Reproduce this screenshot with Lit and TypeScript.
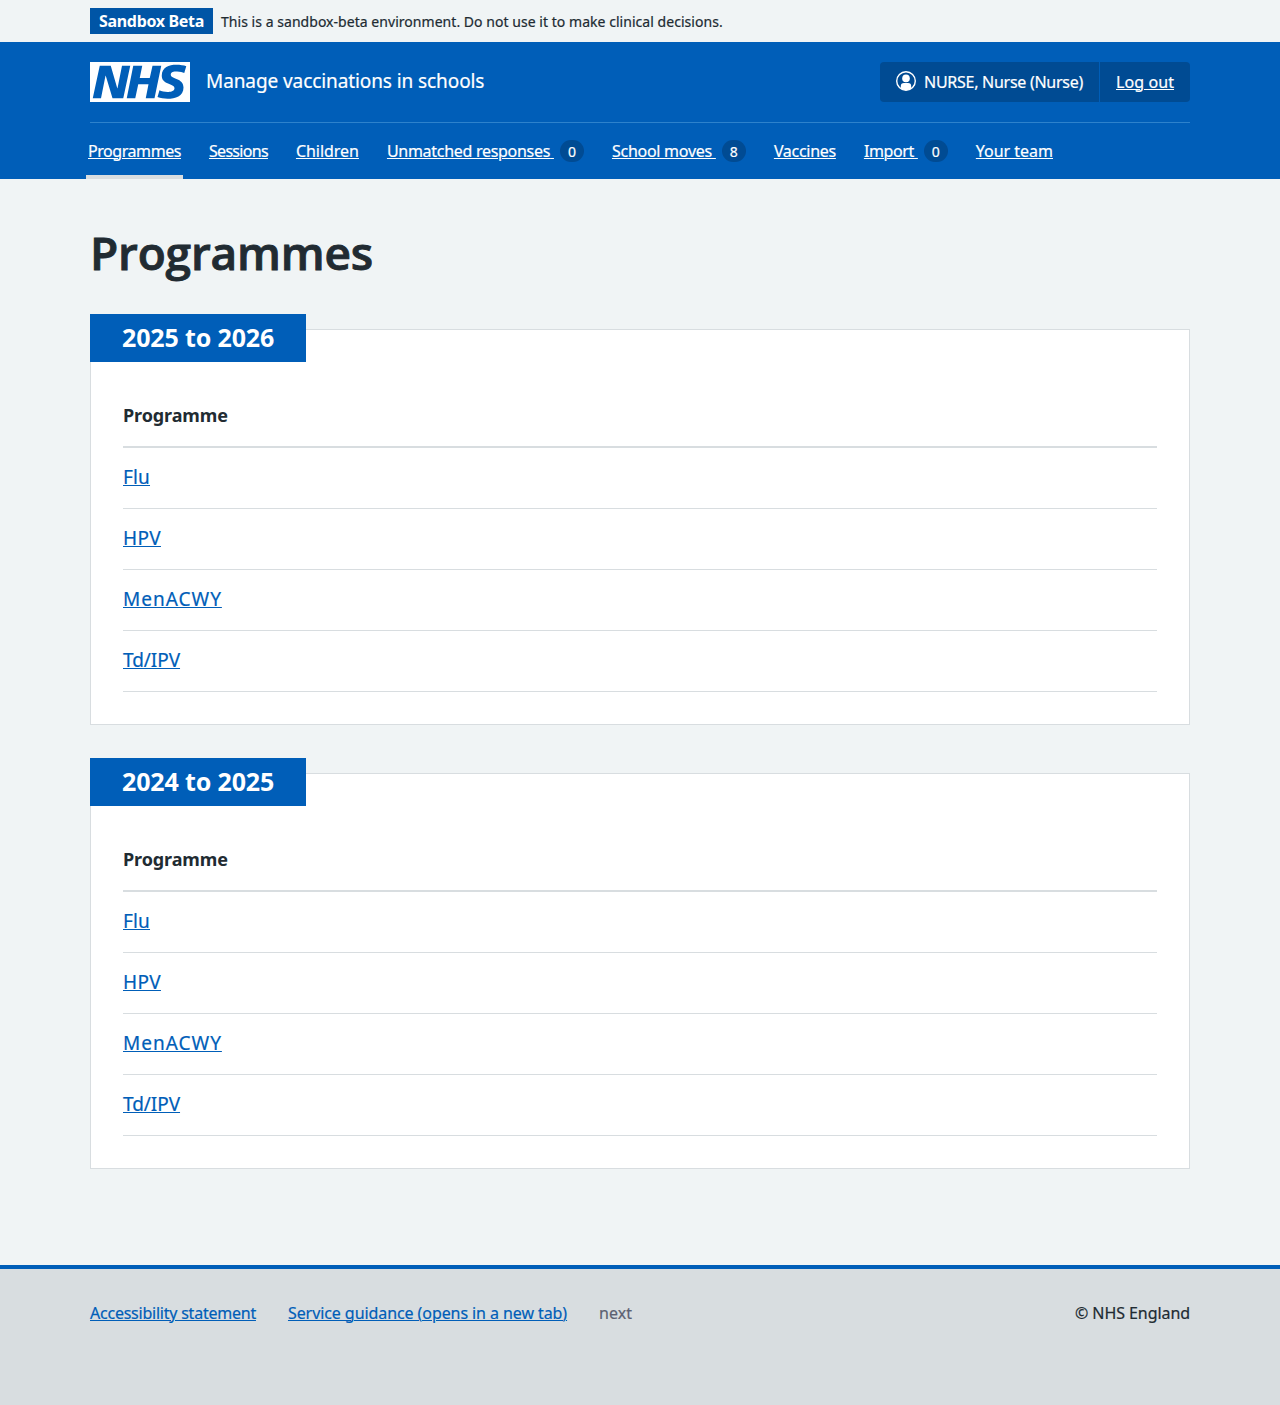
import { LitElement, html, css, nothing } from "lit";

interface NavItem { label: string; cls: string; count?: number; current?: boolean; }

const navItems: NavItem[] = [
  { label: "Programmes", cls: "n-programmes", current: true },
  { label: "Sessions", cls: "n-sessions" },
  { label: "Children", cls: "n-children" },
  { label: "Unmatched responses", cls: "n-unmatched", count: 0 },
  { label: "School moves", cls: "n-moves", count: 8 },
  { label: "Vaccines", cls: "n-vaccines" },
  { label: "Import", cls: "n-import", count: 0 },
  { label: "Your team", cls: "n-team" },
];

const programmes = [
  { label: "Flu", cls: "p-flu" },
  { label: "HPV", cls: "p-hpv" },
  { label: "MenACWY", cls: "p-men" },
  { label: "Td/IPV", cls: "p-td" },
];

class AppRoot extends LitElement {
  static styles = css`
    :host { display: block; min-height: 1405px; background: #f0f4f5; color: #212b32;
      font: 400 16px/24px "Noto Sans", "Open Sans", sans-serif; -webkit-text-stroke: 0.2px currentColor; }
    * { box-sizing: border-box; }
    .wrap { width: 1100px; margin: 0 auto; }
    a { color: #005eb8; text-decoration: underline; text-decoration-thickness: 1px; text-underline-offset: 1px; white-space: nowrap; -webkit-text-stroke: 0.2px currentColor; }

    .banner .wrap { height: 42px; padding: 8px 0; display: flex; align-items: center; gap: 8px; }
    .tag { height: 26px; width: 123px; text-align: center; background: #0055a6; color: #fff; font-weight: 700; line-height: 26px; letter-spacing: -0.32px; white-space: nowrap; -webkit-text-stroke: 0; }
    .notice { font-size: 14px; line-height: 26px; letter-spacing: 0.04px; padding-top: 1px; white-space: nowrap; }

    .header { background: #005eb8; color: #fff; height: 137px; -webkit-text-stroke: 0.2px #fff; }
    .header a { color: #fff; }
    .top { height: 81px; padding: 20px 0; display: flex; border-bottom: 1px solid #2d82cc; }
    .logo { width: 100px; height: 40px; display: block; -webkit-text-stroke: 0; }
    .service { flex: 1; padding-left: 16px; font-size: 19px; line-height: 39px; letter-spacing: -0.09px; white-space: nowrap; }
    .account { display: flex; height: 40px; border-radius: 4px; background: #004b93; overflow: hidden; line-height: 40px; white-space: nowrap; }
    .user { width: 219px; padding-left: 16px; display: flex; gap: 8px; letter-spacing: -0.27px; }
    .user svg { width: 20px; height: 20px; margin-top: 9px; flex: none; }
    .logout { width: 91px; padding-left: 16px; border-left: 1px solid #005eb8; letter-spacing: 0.09px; }

    .nav { display: flex; gap: 24px; margin-left: -4px; height: 56px; }
    .item { display: flex; height: 56px; padding: 0 2px; line-height: 56px; gap: 6px; }
    .current { border-bottom: 4px solid #d8dde0; }
    .count { width: 24px; height: 22px; margin-top: 17px; border-radius: 12px; background: #004b93; font-size: 14px; line-height: 23px; text-align: center; }
    .n-programmes { letter-spacing: -0.44px; }
    .n-sessions { letter-spacing: -0.69px; }
    .n-children { letter-spacing: -0.04px; }
    .n-unmatched { letter-spacing: -0.29px; }
    .n-moves { letter-spacing: -0.26px; }
    .n-vaccines { letter-spacing: -0.29px; }
    .n-import { letter-spacing: -0.36px; }
    .n-team { letter-spacing: -0.02px; }

    .main { padding-top: 40px; height: 1086px; }
    h1 { margin: 0 0 44px; font: 600 46px/66px "Open Sans", sans-serif; letter-spacing: -0.2px; -webkit-text-stroke: 0.9px currentColor; }
    .card { height: 396px; margin-bottom: 48px; background: #fff; border: 1px solid #d8dde0; padding: 0 32px; }
    .year { margin: -16px 0 0 -33px; width: 216px; height: 48px; padding-left: 32px; background: #005eb8; color: #fff;
      font-size: 25px; font-weight: 700; line-height: 46px; letter-spacing: -0.15px; white-space: nowrap; -webkit-text-stroke: 0; }
    .th { margin-top: 24px; height: 62px; border-bottom: 2px solid #d8dde0; font-weight: 700; font-size: 18px; line-height: 59px; letter-spacing: -0.1px; -webkit-text-stroke: 0; }
    .td { height: 61px; border-bottom: 1px solid #d8dde0; font-size: 19px; line-height: 58px; }
    .p-flu { letter-spacing: 0.17px; }
    .p-hpv { letter-spacing: 0.33px; }
    .p-men { letter-spacing: 1px; }
    .p-td { letter-spacing: -0.05px; }

    .footer { height: 140px; border-top: 4px solid #005eb8; background: #d8dde0; padding-top: 32px; }
    .footer .wrap { display: flex; gap: 32px; white-space: nowrap; }
    .f-access { letter-spacing: -0.23px; }
    .f-guide { letter-spacing: -0.08px; }
    .next { color: #5c6172; letter-spacing: 0.05px; }
    .copy { margin-left: auto; letter-spacing: -0.07px; }
  `;

  private card(year: string) {
    return html`<section class="card">
      <h2 class="year">${year}</h2>
      <div class="th">Programme</div>
      ${programmes.map((p) => html`<div class="td"><a class=${p.cls}>${p.label}</a></div>`)}
    </section>`;
  }

  render() {
    return html`
      <div class="banner"><div class="wrap">
        <span class="tag">Sandbox Beta</span>
        <span class="notice">This is a sandbox-beta environment. Do not use it to make clinical decisions.</span>
      </div></div>
      <header class="header"><div class="wrap">
        <div class="top">
          <svg class="logo" viewBox="0 0 40 16">
            <path fill="#fff" d="M0 0h40v16H0z" />
            <path fill="#005eb8" d="M3.9 1.5h4.4l2.6 9h.1l1.8-9h3.3l-2.8 13H9l-2.7-9h-.1l-1.8 9H1.1M17.3 1.5h3.6l-1 4.9h4L25 1.5h3.5l-2.7 13h-3.5l1.1-5.6h-4.1l-1.2 5.6h-3.4M37.7 4.4c-.7-.3-1.6-.6-2.9-.6-1.4 0-2.5.2-2.5 1.3 0 1.8 5.1 1.2 5.1 5.1 0 3.6-3.3 4.5-6.4 4.5-1.3 0-2.9-.3-4-.7l.8-2.7c.7.4 2.1.7 3.2.7s2.8-.2 2.8-1.5c0-2.1-5.1-1.3-5.1-5 0-3.4 2.9-4.4 5.8-4.4 1.6 0 3.1.2 4 .6" />
          </svg>
          <span class="service">Manage vaccinations in schools</span>
          <div class="account">
            <span class="user">
              <svg viewBox="0 0 20 20">
                <circle cx="10" cy="10" r="9.3" fill="none" stroke="#fff" stroke-width="1.4" />
                <circle cx="10" cy="7.4" r="3.8" fill="#fff" />
                <path fill="#fff" d="M4.8 17.5v-2.2a3.2 3.2 0 0 1 3.2-3.2h4a3.2 3.2 0 0 1 3.2 3.2v2.2A9.2 9.2 0 0 1 10 19.2a9.2 9.2 0 0 1-5.2-1.7z" />
              </svg>
              <span>NURSE, Nurse (Nurse)</span>
            </span>
            <span class="logout"><a>Log out</a></span>
          </div>
        </div>
        <nav class="nav">
          ${navItems.map((n) => html`<span class="item ${n.current ? "current" : ""}"><a class=${n.cls}>${n.label}${n.count === undefined ? nothing : "\u00a0"}</a>${n.count === undefined ? nothing : html`<span class="count">${n.count}</span>`}</span>`)}
        </nav>
      </div></header>
      <main class="main wrap">
        <h1>Programmes</h1>
        ${this.card("2025 to 2026")}
        ${this.card("2024 to 2025")}
      </main>
      <footer class="footer"><div class="wrap">
        <a class="f-access">Accessibility statement</a>
        <a class="f-guide">Service guidance (opens in a new tab)</a>
        <span class="next">next</span>
        <span class="copy">© NHS England</span>
      </div></footer>`;
  }
}
customElements.define("app-root", AppRoot);
